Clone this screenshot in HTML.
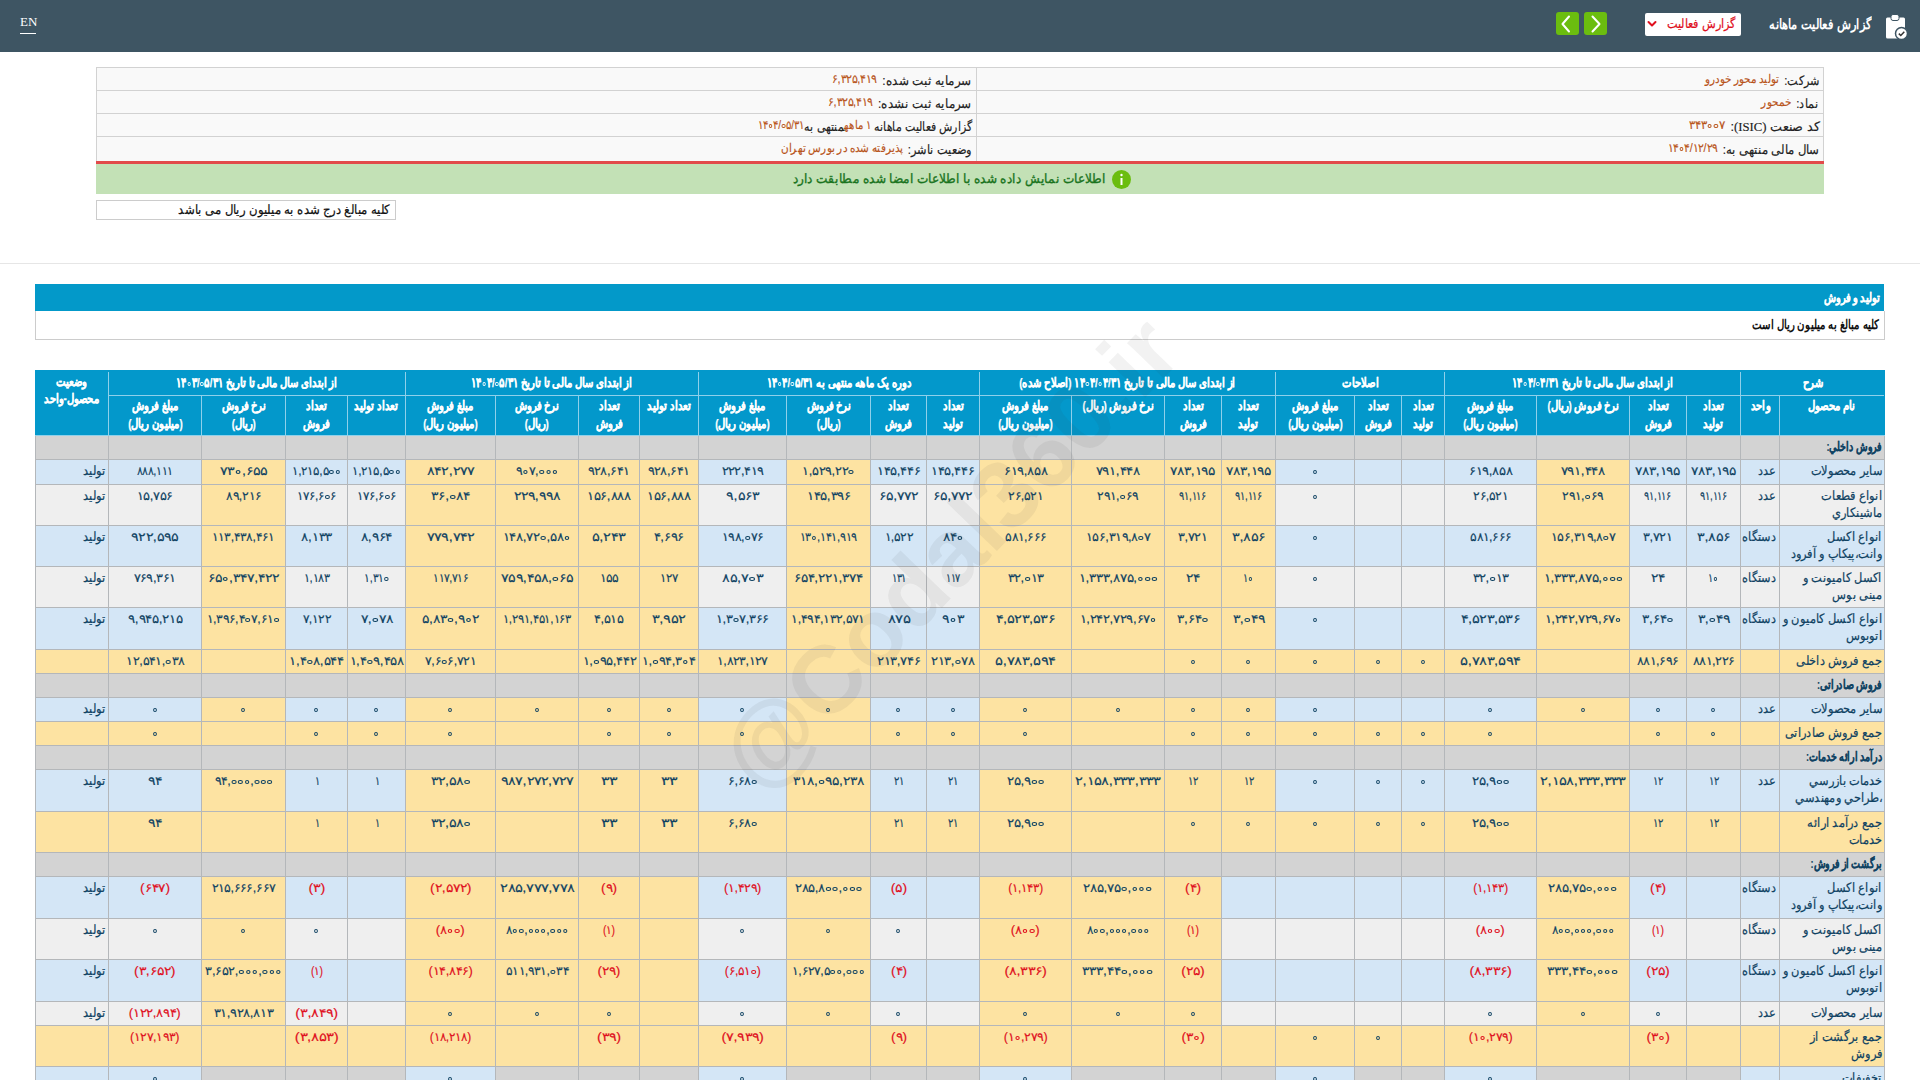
<!DOCTYPE html>
<html lang="fa" dir="rtl"><head><meta charset="utf-8"><title>codal</title><style>
*{box-sizing:border-box}
html,body{margin:0;padding:0}
body{width:1920px;height:1080px;overflow:hidden;background:#fff;position:relative;font-family:"Liberation Sans",sans-serif;direction:rtl}
.a{position:absolute}
.c{position:absolute;font-size:11px;line-height:17px;padding-top:3px;text-align:center;color:#0f4262;white-space:nowrap;overflow:hidden}
.z{display:inline-block;width:4.6px;height:3.9px;border:1.4px solid currentColor;border-radius:50%;margin:0 0.8px;vertical-align:1.5px}
.n{display:inline-block;direction:ltr;unicode-bidi:isolate;font-size:12px;-webkit-text-stroke:0.15px #0f4262}
.r{color:#e0101e;-webkit-text-stroke:0.15px #e0101e}
.lab{text-align:right;padding-right:2px}
.vz{text-align:right;padding-right:2px}
.un{text-align:right;padding-right:3px}
.l{display:inline-block;font-size:12.5px;transform-origin:100% 50%;transform:scaleX(0.878);-webkit-text-stroke:0.2px #0f4262}
.sec .l{-webkit-text-stroke:0.15px #0f4262;transform:scaleX(0.73)}
.sec{font-weight:bold}
.hd{color:#fff;font-weight:bold;font-size:12.5px;-webkit-text-stroke:0.25px #fff;display:flex;justify-content:center;align-items:flex-start;overflow:visible}
.hs{display:inline-block;transform:scaleX(0.77)}
.u{display:inline-block;transform-origin:100% 50%;transform:scaleX(0.87);font-size:12.5px;-webkit-text-stroke:0.2px #174a6b}
.h1{padding-top:3px}
.h2{padding-top:2px;line-height:17.5px}
.vzh{line-height:17.5px;padding-top:1.5px}
.top{left:0;top:0;width:1920px;height:52px;background:#3e5563}
.info{left:96px;top:67px;width:1728px;height:95px;background:#d2d2d2;}
.ir{position:absolute;background:#f9f9f9;font-size:13px;line-height:22px;padding-top:2px;color:#222;-webkit-text-stroke:0.15px #222;padding-right:4px;white-space:nowrap}
.o{color:#b8541a;-webkit-text-stroke:0.15px #b8541a;font-size:12px;margin-right:6px;position:relative;top:-2px}
.iw{display:inline-block;transform-origin:100% 50%}
.d{display:inline-block;direction:ltr;unicode-bidi:isolate}
.lat{font-family:"Liberation Serif",serif;font-size:13px}
</style></head>
<body>
<div class="a top"></div>
<svg class="a" style="left:0;top:0" width="1920" height="52">
<rect x="1556" y="12" width="23" height="23" rx="3" fill="#6bbd0f"/>
<rect x="1584" y="12" width="23" height="23" rx="3" fill="#6bbd0f"/>
<path d="M1569 16.5 L1562.5 24 L1569 31.5" stroke="#fff" stroke-width="2" fill="none" stroke-linecap="round" stroke-linejoin="round"/>
<path d="M1592.5 16.5 L1599.5 24 L1592.5 31.5" stroke="#fff" stroke-width="2" fill="none" stroke-linecap="round" stroke-linejoin="round"/>
<rect x="1645" y="13" width="96" height="23" rx="2" fill="#fff"/>
<path d="M1648.5 22 L1652 25.5 L1655.5 22" stroke="#e0101e" stroke-width="2" fill="none" stroke-linecap="round" stroke-linejoin="round"/>
<rect x="1886" y="17.5" width="19" height="21" rx="1.5" fill="#fff"/>
<rect x="1891" y="14.5" width="8" height="6" rx="2" fill="#fff" stroke="#3e5563" stroke-width="1"/>
<circle cx="1901.5" cy="33.5" r="6" fill="#fff" stroke="#3e5563" stroke-width="1.5"/>
<path d="M1898.8 33.6 L1900.8 35.5 L1904.3 31.8" stroke="#333" stroke-width="1.5" fill="none"/>
<line x1="20" y1="33.5" x2="36" y2="33.5" stroke="#fff" stroke-width="1"/>
</svg>
<div class="a" style="left:20px;top:14px;font-family:'Liberation Serif',serif;color:#fff;font-size:13px;line-height:16px;direction:ltr">EN</div>
<div id="ttl" class="a" style="right:48px;top:13px;color:#fff;font-size:14px;font-weight:bold;line-height:22px"><span style="display:inline-block;transform-origin:100% 50%;transform:scaleX(0.814)">گزارش فعالیت ماهانه</span></div>
<div id="sel" class="a" style="right:184px;top:14px;color:#e0101e;font-size:13px;line-height:20px;-webkit-text-stroke:0.2px #e0101e"><span style="display:inline-block;transform-origin:100% 50%;transform:scaleX(0.867)">گزارش فعالیت</span></div>
<div class="a info"></div>
<div class="ir" style="left:977px;top:68px;width:846px;height:22px"><span class="iw" style="transform:scaleX(0.864)">شرکت:<span class="o">تولید محور خودرو</span></span></div>
<div class="ir" style="left:97px;top:68px;width:879px;height:22px"><span class="iw" style="transform:scaleX(0.921)">سرمایه ثبت شده:<span class="o"><span class="d">۶,۳۲۵,۴۱۹</span></span></span></div>
<div class="ir" style="left:977px;top:91px;width:846px;height:22px"><span class="iw" style="transform:scaleX(0.871)">نماد:<span class="o">خمحور</span></span></div>
<div class="ir" style="left:97px;top:91px;width:879px;height:22px"><span class="iw" style="transform:scaleX(0.917)">سرمایه ثبت نشده:<span class="o"><span class="d">۶,۳۲۵,۴۱۹</span></span></span></div>
<div class="ir" style="left:977px;top:114px;width:846px;height:22px"><span class="iw" style="transform:scaleX(0.977)">کد صنعت <span class="lat">(ISIC)</span>:<span class="o"><span class="d">۳۴۳<i class="z"></i><i class="z"></i>۷</span></span></span></div>
<div class="ir" style="left:97px;top:114px;width:879px;height:22px"><span class="iw" style="transform:scaleX(0.843)">گزارش فعالیت ماهانه <span class="o" style="margin:0"><span class="d">۱</span> ماهه</span>منتهی به<span class="o" style="margin:0"><span class="d">۱۴<i class="z"></i>۴/<i class="z"></i>۵/۳۱</span></span></span></div>
<div class="ir" style="left:977px;top:137px;width:846px;height:24px"><span class="iw" style="transform:scaleX(0.899)">سال مالی منتهی به:<span class="o"><span class="d">۱۴<i class="z"></i>۴/۱۲/۲۹</span></span></span></div>
<div class="ir" style="left:97px;top:137px;width:879px;height:24px"><span class="iw" style="transform:scaleX(0.872)">وضعیت ناشر:<span class="o">پذیرفته شده در بورس تهران</span></span></div>
<div class="a" style="left:96px;top:161px;width:1728px;height:3px;background:#e24a4a"></div>
<div class="a" style="left:96px;top:164px;width:1728px;height:30px;background:#c3e1b6"></div>
<div id="grn" class="a" style="right:814px;top:169px;color:#1a741e;font-size:13px;line-height:20px;-webkit-text-stroke:0.35px #1a741e"><span style="display:inline-block;transform-origin:100% 50%;transform:scaleX(0.93)">اطلاعات نمایش داده شده با اطلاعات امضا شده مطابقت دارد</span></div>
<svg class="a" style="left:1111px;top:169px" width="21" height="21"><circle cx="10.5" cy="10.5" r="9.5" fill="#6bbd0f"/><rect x="9.5" y="9" width="2" height="7" fill="#fff"/><circle cx="10.5" cy="6" r="1.2" fill="#fff"/></svg>
<div id="note" class="a" style="left:96px;top:200px;width:300px;height:20px;border:1px solid #ccc;font-size:13px;line-height:18px;color:#111;-webkit-text-stroke:0.2px #111;padding-right:5px"><span style="display:inline-block;transform-origin:100% 50%;transform:scaleX(0.9)">کلیه مبالغ درج شده به میلیون ریال می باشد</span></div>
<div class="a" style="left:0;top:263px;width:1920px;height:1px;background:#e6e6e6"></div>
<div class="a" style="left:35px;top:284px;width:1849px;height:27px;background:#0399c9;color:#fff;font-weight:bold;font-size:13px;line-height:27px;padding-right:4px;-webkit-text-stroke:0.2px #fff"><span style="display:inline-block;transform-origin:100% 50%;transform:scaleX(0.76)">تولید و فروش</span></div>
<div class="a" style="left:35px;top:311px;width:1850px;height:29px;border:1px solid #ccc;border-top:0;font-weight:bold;font-size:13px;line-height:28px;padding-right:5px;color:#111"><span style="display:inline-block;transform-origin:100% 50%;transform:scaleX(0.778)">کلیه مبالغ به میلیون ریال است</span></div>
<div class="a" style="left:35px;top:370px;width:1850px;height:66px;background:#8fd0ea"></div>
<div class="a" style="left:35px;top:370px;width:1850px;height:2px;background:#0398cb"></div>
<div class="a" style="left:35px;top:370px;width:1px;height:65px;background:#0398cb"></div>
<div class="a" style="left:1884px;top:370px;width:1px;height:65px;background:#0398cb"></div>
<div class="a" style="left:35px;top:436px;width:1850px;height:644px;background:#b4b7ba"></div>
<div class="c hd h1" style="left:1741px;top:372px;width:143px;height:23px;background:#0398cb"><span class="hs">شرح</span></div>
<div class="c hd h1" style="left:1445px;top:372px;width:295px;height:23px;background:#0398cb"><span class="hs">از ابتدای سال مالی تا تاریخ <span class="d">۱۴<i class="z"></i>۴/<i class="z"></i>۴/۳۱</span></span></div>
<div class="c hd h1" style="left:1276px;top:372px;width:168px;height:23px;background:#0398cb"><span class="hs">اصلاحات</span></div>
<div class="c hd h1" style="left:980px;top:372px;width:295px;height:23px;background:#0398cb"><span class="hs">از ابتدای سال مالی تا تاریخ <span class="d">۱۴<i class="z"></i>۴/<i class="z"></i>۴/۳۱</span> (اصلاح شده)</span></div>
<div class="c hd h1" style="left:699px;top:372px;width:280px;height:23px;background:#0398cb"><span class="hs">دوره یک ماهه منتهی به <span class="d">۱۴<i class="z"></i>۴/<i class="z"></i>۵/۳۱</span></span></div>
<div class="c hd h1" style="left:406px;top:372px;width:292px;height:23px;background:#0398cb"><span class="hs">از ابتدای سال مالی تا تاریخ <span class="d">۱۴<i class="z"></i>۴/<i class="z"></i>۵/۳۱</span></span></div>
<div class="c hd h1" style="left:109px;top:372px;width:296px;height:23px;background:#0398cb"><span class="hs">از ابتدای سال مالی تا تاریخ <span class="d">۱۴<i class="z"></i>۳/<i class="z"></i>۵/۳۱</span></span></div>
<div class="c hd vzh" style="left:36px;top:372px;width:72px;height:63px;background:#0398cb"><span class="hs">وضعیت<br>محصول-واحد</span></div>
<div class="c hd h2" style="left:1780px;top:396px;width:104px;height:39px;background:#0398cb"><span class="hs">نام محصول</span></div>
<div class="c hd h2" style="left:1741px;top:396px;width:38px;height:39px;background:#0398cb"><span class="hs">واحد</span></div>
<div class="c hd h2" style="left:1687px;top:396px;width:53px;height:39px;background:#0398cb"><span class="hs">تعداد<br>تولید</span></div>
<div class="c hd h2" style="left:1630px;top:396px;width:56px;height:39px;background:#0398cb"><span class="hs">تعداد<br>فروش</span></div>
<div class="c hd h2" style="left:1537px;top:396px;width:92px;height:39px;background:#0398cb"><span class="hs">نرخ فروش (ریال)</span></div>
<div class="c hd h2" style="left:1445px;top:396px;width:91px;height:39px;background:#0398cb"><span class="hs">مبلغ فروش<br>(میلیون ریال)</span></div>
<div class="c hd h2" style="left:1402px;top:396px;width:42px;height:39px;background:#0398cb"><span class="hs">تعداد<br>تولید</span></div>
<div class="c hd h2" style="left:1355px;top:396px;width:46px;height:39px;background:#0398cb"><span class="hs">تعداد<br>فروش</span></div>
<div class="c hd h2" style="left:1276px;top:396px;width:78px;height:39px;background:#0398cb"><span class="hs">مبلغ فروش<br>(میلیون ریال)</span></div>
<div class="c hd h2" style="left:1222px;top:396px;width:53px;height:39px;background:#0398cb"><span class="hs">تعداد<br>تولید</span></div>
<div class="c hd h2" style="left:1165px;top:396px;width:56px;height:39px;background:#0398cb"><span class="hs">تعداد<br>فروش</span></div>
<div class="c hd h2" style="left:1072px;top:396px;width:92px;height:39px;background:#0398cb"><span class="hs">نرخ فروش (ریال)</span></div>
<div class="c hd h2" style="left:980px;top:396px;width:91px;height:39px;background:#0398cb"><span class="hs">مبلغ فروش<br>(میلیون ریال)</span></div>
<div class="c hd h2" style="left:927px;top:396px;width:52px;height:39px;background:#0398cb"><span class="hs">تعداد<br>تولید</span></div>
<div class="c hd h2" style="left:871px;top:396px;width:55px;height:39px;background:#0398cb"><span class="hs">تعداد<br>فروش</span></div>
<div class="c hd h2" style="left:787px;top:396px;width:83px;height:39px;background:#0398cb"><span class="hs">نرخ فروش<br>(ریال)</span></div>
<div class="c hd h2" style="left:699px;top:396px;width:87px;height:39px;background:#0398cb"><span class="hs">مبلغ فروش<br>(میلیون ریال)</span></div>
<div class="c hd h2" style="left:640px;top:396px;width:58px;height:39px;background:#0398cb"><span class="hs">تعداد تولید</span></div>
<div class="c hd h2" style="left:579px;top:396px;width:60px;height:39px;background:#0398cb"><span class="hs">تعداد<br>فروش</span></div>
<div class="c hd h2" style="left:496px;top:396px;width:82px;height:39px;background:#0398cb"><span class="hs">نرخ فروش<br>(ریال)</span></div>
<div class="c hd h2" style="left:406px;top:396px;width:89px;height:39px;background:#0398cb"><span class="hs">مبلغ فروش<br>(میلیون ریال)</span></div>
<div class="c hd h2" style="left:348px;top:396px;width:57px;height:39px;background:#0398cb"><span class="hs">تعداد تولید</span></div>
<div class="c hd h2" style="left:286px;top:396px;width:61px;height:39px;background:#0398cb"><span class="hs">تعداد<br>فروش</span></div>
<div class="c hd h2" style="left:202px;top:396px;width:83px;height:39px;background:#0398cb"><span class="hs">نرخ فروش<br>(ریال)</span></div>
<div class="c hd h2" style="left:109px;top:396px;width:92px;height:39px;background:#0398cb"><span class="hs">مبلغ فروش<br>(میلیون ریال)</span></div>
<div class="c lab sec" style="left:1780px;top:436px;width:104px;height:23px;background:#d3d3d3"><span class="l">فروش داخلي:</span></div>
<div class="c" style="left:1741px;top:436px;width:38px;height:23px;background:#d3d3d3"></div>
<div class="c" style="left:1687px;top:436px;width:53px;height:23px;background:#d3d3d3"></div>
<div class="c" style="left:1630px;top:436px;width:56px;height:23px;background:#d3d3d3"></div>
<div class="c" style="left:1537px;top:436px;width:92px;height:23px;background:#d3d3d3"></div>
<div class="c" style="left:1445px;top:436px;width:91px;height:23px;background:#d3d3d3"></div>
<div class="c" style="left:1402px;top:436px;width:42px;height:23px;background:#d3d3d3"></div>
<div class="c" style="left:1355px;top:436px;width:46px;height:23px;background:#d3d3d3"></div>
<div class="c" style="left:1276px;top:436px;width:78px;height:23px;background:#d3d3d3"></div>
<div class="c" style="left:1222px;top:436px;width:53px;height:23px;background:#d3d3d3"></div>
<div class="c" style="left:1165px;top:436px;width:56px;height:23px;background:#d3d3d3"></div>
<div class="c" style="left:1072px;top:436px;width:92px;height:23px;background:#d3d3d3"></div>
<div class="c" style="left:980px;top:436px;width:91px;height:23px;background:#d3d3d3"></div>
<div class="c" style="left:927px;top:436px;width:52px;height:23px;background:#d3d3d3"></div>
<div class="c" style="left:871px;top:436px;width:55px;height:23px;background:#d3d3d3"></div>
<div class="c" style="left:787px;top:436px;width:83px;height:23px;background:#d3d3d3"></div>
<div class="c" style="left:699px;top:436px;width:87px;height:23px;background:#d3d3d3"></div>
<div class="c" style="left:640px;top:436px;width:58px;height:23px;background:#d3d3d3"></div>
<div class="c" style="left:579px;top:436px;width:60px;height:23px;background:#d3d3d3"></div>
<div class="c" style="left:496px;top:436px;width:82px;height:23px;background:#d3d3d3"></div>
<div class="c" style="left:406px;top:436px;width:89px;height:23px;background:#d3d3d3"></div>
<div class="c" style="left:348px;top:436px;width:57px;height:23px;background:#d3d3d3"></div>
<div class="c" style="left:286px;top:436px;width:61px;height:23px;background:#d3d3d3"></div>
<div class="c" style="left:202px;top:436px;width:83px;height:23px;background:#d3d3d3"></div>
<div class="c" style="left:109px;top:436px;width:92px;height:23px;background:#d3d3d3"></div>
<div class="c" style="left:36px;top:436px;width:72px;height:23px;background:#d3d3d3"></div>
<div class="c lab" style="left:1780px;top:460px;width:104px;height:24px;background:#d4e6f6"><span class="l">سایر محصولات</span></div>
<div class="c un" style="left:1741px;top:460px;width:38px;height:24px;background:#d4e6f6"><span class="u">عدد</span></div>
<div class="c" style="left:1687px;top:460px;width:53px;height:24px;background:#d4e6f6"><span class="n" style="transform:scaleX(1.144)">۷۸۳,۱۹۵</span></div>
<div class="c" style="left:1630px;top:460px;width:56px;height:24px;background:#d4e6f6"><span class="n" style="transform:scaleX(1.144)">۷۸۳,۱۹۵</span></div>
<div class="c" style="left:1537px;top:460px;width:92px;height:24px;background:#fde3a2"><span class="n" style="transform:scaleX(1.115)">۷۹۱,۴۴۸</span></div>
<div class="c" style="left:1445px;top:460px;width:91px;height:24px;background:#d4e6f6"><span class="n" style="transform:scaleX(1.092)">۶۱۹,۸۵۸</span></div>
<div class="c" style="left:1402px;top:460px;width:42px;height:24px;background:#d4e6f6"></div>
<div class="c" style="left:1355px;top:460px;width:46px;height:24px;background:#d4e6f6"></div>
<div class="c" style="left:1276px;top:460px;width:78px;height:24px;background:#d4e6f6"><span class="n" style="transform:scaleX(0.933)"><i class="z"></i></span></div>
<div class="c" style="left:1222px;top:460px;width:53px;height:24px;background:#fde3a2"><span class="n" style="transform:scaleX(1.144)">۷۸۳,۱۹۵</span></div>
<div class="c" style="left:1165px;top:460px;width:56px;height:24px;background:#fde3a2"><span class="n" style="transform:scaleX(1.144)">۷۸۳,۱۹۵</span></div>
<div class="c" style="left:1072px;top:460px;width:92px;height:24px;background:#fde3a2"><span class="n" style="transform:scaleX(1.115)">۷۹۱,۴۴۸</span></div>
<div class="c" style="left:980px;top:460px;width:91px;height:24px;background:#fde3a2"><span class="n" style="transform:scaleX(1.092)">۶۱۹,۸۵۸</span></div>
<div class="c" style="left:927px;top:460px;width:52px;height:24px;background:#d4e6f6"><span class="n" style="transform:scaleX(1.092)">۱۴۵,۴۴۶</span></div>
<div class="c" style="left:871px;top:460px;width:55px;height:24px;background:#d4e6f6"><span class="n" style="transform:scaleX(1.092)">۱۴۵,۴۴۶</span></div>
<div class="c" style="left:787px;top:460px;width:83px;height:24px;background:#fde3a2"><span class="n" style="transform:scaleX(1.069)">۱,۵۲۹,۲۲<i class="z"></i></span></div>
<div class="c" style="left:699px;top:460px;width:87px;height:24px;background:#d4e6f6"><span class="n" style="transform:scaleX(1.072)">۲۲۲,۴۱۹</span></div>
<div class="c" style="left:640px;top:460px;width:58px;height:24px;background:#fde3a2"><span class="n" style="transform:scaleX(1.069)">۹۲۸,۶۴۱</span></div>
<div class="c" style="left:579px;top:460px;width:60px;height:24px;background:#fde3a2"><span class="n" style="transform:scaleX(1.069)">۹۲۸,۶۴۱</span></div>
<div class="c" style="left:496px;top:460px;width:82px;height:24px;background:#fde3a2"><span class="n" style="transform:scaleX(1.052)">۹<i class="z"></i>۷,<i class="z"></i><i class="z"></i><i class="z"></i></span></div>
<div class="c" style="left:406px;top:460px;width:89px;height:24px;background:#fde3a2"><span class="n" style="transform:scaleX(1.197)">۸۴۲,۲۷۷</span></div>
<div class="c" style="left:348px;top:460px;width:57px;height:24px;background:#d4e6f6"><span class="n" style="transform:scaleX(0.992)">۱,۲۱۵,۵<i class="z"></i><i class="z"></i></span></div>
<div class="c" style="left:286px;top:460px;width:61px;height:24px;background:#d4e6f6"><span class="n" style="transform:scaleX(0.992)">۱,۲۱۵,۵<i class="z"></i><i class="z"></i></span></div>
<div class="c" style="left:202px;top:460px;width:83px;height:24px;background:#fde3a2"><span class="n" style="transform:scaleX(1.190)">۷۳<i class="z"></i>,۶۵۵</span></div>
<div class="c" style="left:109px;top:460px;width:92px;height:24px;background:#d4e6f6"><span class="n" style="transform:scaleX(0.923)">۸۸۸,۱۱۱</span></div>
<div class="c vz" style="left:36px;top:460px;width:72px;height:24px;background:#d4e6f6"><span class="l">تولید</span></div>
<div class="c lab" style="left:1780px;top:485px;width:104px;height:40px;background:#efefef"><span class="l">انواع قطعات<br>ماشینکاري</span></div>
<div class="c un" style="left:1741px;top:485px;width:38px;height:40px;background:#efefef"><span class="u">عدد</span></div>
<div class="c" style="left:1687px;top:485px;width:53px;height:40px;background:#efefef"><span class="n" style="transform:scaleX(0.812)">۹۱,۱۱۶</span></div>
<div class="c" style="left:1630px;top:485px;width:56px;height:40px;background:#efefef"><span class="n" style="transform:scaleX(0.812)">۹۱,۱۱۶</span></div>
<div class="c" style="left:1537px;top:485px;width:92px;height:40px;background:#fde3a2"><span class="n" style="transform:scaleX(1.028)">۲۹۱,<i class="z"></i>۶۹</span></div>
<div class="c" style="left:1445px;top:485px;width:91px;height:40px;background:#efefef"><span class="n" style="transform:scaleX(1.033)">۲۶,۵۲۱</span></div>
<div class="c" style="left:1402px;top:485px;width:42px;height:40px;background:#efefef"></div>
<div class="c" style="left:1355px;top:485px;width:46px;height:40px;background:#efefef"></div>
<div class="c" style="left:1276px;top:485px;width:78px;height:40px;background:#efefef"><span class="n" style="transform:scaleX(0.933)"><i class="z"></i></span></div>
<div class="c" style="left:1222px;top:485px;width:53px;height:40px;background:#fde3a2"><span class="n" style="transform:scaleX(0.812)">۹۱,۱۱۶</span></div>
<div class="c" style="left:1165px;top:485px;width:56px;height:40px;background:#fde3a2"><span class="n" style="transform:scaleX(0.812)">۹۱,۱۱۶</span></div>
<div class="c" style="left:1072px;top:485px;width:92px;height:40px;background:#fde3a2"><span class="n" style="transform:scaleX(1.028)">۲۹۱,<i class="z"></i>۶۹</span></div>
<div class="c" style="left:980px;top:485px;width:91px;height:40px;background:#fde3a2"><span class="n" style="transform:scaleX(1.033)">۲۶,۵۲۱</span></div>
<div class="c" style="left:927px;top:485px;width:52px;height:40px;background:#efefef"><span class="n" style="transform:scaleX(1.173)">۶۵,۷۷۲</span></div>
<div class="c" style="left:871px;top:485px;width:55px;height:40px;background:#efefef"><span class="n" style="transform:scaleX(1.173)">۶۵,۷۷۲</span></div>
<div class="c" style="left:787px;top:485px;width:83px;height:40px;background:#fde3a2"><span class="n" style="transform:scaleX(1.108)">۱۴۵,۳۹۶</span></div>
<div class="c" style="left:699px;top:485px;width:87px;height:40px;background:#efefef"><span class="n" style="transform:scaleX(1.189)">۹,۵۶۳</span></div>
<div class="c" style="left:640px;top:485px;width:58px;height:40px;background:#fde3a2"><span class="n" style="transform:scaleX(1.100)">۱۵۶,۸۸۸</span></div>
<div class="c" style="left:579px;top:485px;width:60px;height:40px;background:#fde3a2"><span class="n" style="transform:scaleX(1.100)">۱۵۶,۸۸۸</span></div>
<div class="c" style="left:496px;top:485px;width:82px;height:40px;background:#fde3a2"><span class="n" style="transform:scaleX(1.177)">۲۲۹,۹۹۸</span></div>
<div class="c" style="left:406px;top:485px;width:89px;height:40px;background:#fde3a2"><span class="n" style="transform:scaleX(1.161)">۳۶,<i class="z"></i>۸۴</span></div>
<div class="c" style="left:348px;top:485px;width:57px;height:40px;background:#efefef"><span class="n" style="transform:scaleX(0.992)">۱۷۶,۶<i class="z"></i>۶</span></div>
<div class="c" style="left:286px;top:485px;width:61px;height:40px;background:#efefef"><span class="n" style="transform:scaleX(0.992)">۱۷۶,۶<i class="z"></i>۶</span></div>
<div class="c" style="left:202px;top:485px;width:83px;height:40px;background:#fde3a2"><span class="n" style="transform:scaleX(1.036)">۸۹,۲۱۶</span></div>
<div class="c" style="left:109px;top:485px;width:92px;height:40px;background:#efefef"><span class="n" style="transform:scaleX(1.076)">۱۵,۷۵۶</span></div>
<div class="c vz" style="left:36px;top:485px;width:72px;height:40px;background:#efefef"><span class="l">تولید</span></div>
<div class="c lab" style="left:1780px;top:526px;width:104px;height:40px;background:#d4e6f6"><span class="l">انواع اکسل<br>وانت،پیکاپ و آفرود</span></div>
<div class="c un" style="left:1741px;top:526px;width:38px;height:40px;background:#d4e6f6"><span class="u">دستگاه</span></div>
<div class="c" style="left:1687px;top:526px;width:53px;height:40px;background:#d4e6f6"><span class="n" style="transform:scaleX(1.200)">۳,۸۵۶</span></div>
<div class="c" style="left:1630px;top:526px;width:56px;height:40px;background:#d4e6f6"><span class="n" style="transform:scaleX(1.070)">۳,۷۲۱</span></div>
<div class="c" style="left:1537px;top:526px;width:92px;height:40px;background:#fde3a2"><span class="n" style="transform:scaleX(1.062)">۱۵۶,۳۱۹,۸<i class="z"></i>۷</span></div>
<div class="c" style="left:1445px;top:526px;width:91px;height:40px;background:#d4e6f6"><span class="n" style="transform:scaleX(1.033)">۵۸۱,۶۶۶</span></div>
<div class="c" style="left:1402px;top:526px;width:42px;height:40px;background:#d4e6f6"></div>
<div class="c" style="left:1355px;top:526px;width:46px;height:40px;background:#d4e6f6"></div>
<div class="c" style="left:1276px;top:526px;width:78px;height:40px;background:#d4e6f6"><span class="n" style="transform:scaleX(0.933)"><i class="z"></i></span></div>
<div class="c" style="left:1222px;top:526px;width:53px;height:40px;background:#fde3a2"><span class="n" style="transform:scaleX(1.200)">۳,۸۵۶</span></div>
<div class="c" style="left:1165px;top:526px;width:56px;height:40px;background:#fde3a2"><span class="n" style="transform:scaleX(1.070)">۳,۷۲۱</span></div>
<div class="c" style="left:1072px;top:526px;width:92px;height:40px;background:#fde3a2"><span class="n" style="transform:scaleX(1.062)">۱۵۶,۳۱۹,۸<i class="z"></i>۷</span></div>
<div class="c" style="left:980px;top:526px;width:91px;height:40px;background:#fde3a2"><span class="n" style="transform:scaleX(1.033)">۵۸۱,۶۶۶</span></div>
<div class="c" style="left:927px;top:526px;width:52px;height:40px;background:#d4e6f6"><span class="n" style="transform:scaleX(1.150)">۸۴<i class="z"></i></span></div>
<div class="c" style="left:871px;top:526px;width:55px;height:40px;background:#d4e6f6"><span class="n" style="transform:scaleX(1.030)">۱,۵۲۲</span></div>
<div class="c" style="left:787px;top:526px;width:83px;height:40px;background:#fde3a2"><span class="n" style="transform:scaleX(0.940)">۱۳<i class="z"></i>,۱۴۱,۹۱۹</span></div>
<div class="c" style="left:699px;top:526px;width:87px;height:40px;background:#d4e6f6"><span class="n" style="transform:scaleX(1.051)">۱۹۸,<i class="z"></i>۷۶</span></div>
<div class="c" style="left:640px;top:526px;width:58px;height:40px;background:#fde3a2"><span class="n" style="transform:scaleX(1.104)">۴,۶۹۶</span></div>
<div class="c" style="left:579px;top:526px;width:60px;height:40px;background:#fde3a2"><span class="n" style="transform:scaleX(1.222)">۵,۲۴۳</span></div>
<div class="c" style="left:496px;top:526px;width:82px;height:40px;background:#fde3a2"><span class="n" style="transform:scaleX(1.108)">۱۴۸,۷۲<i class="z"></i>,۵۸<i class="z"></i></span></div>
<div class="c" style="left:406px;top:526px;width:89px;height:40px;background:#fde3a2"><span class="n" style="transform:scaleX(1.205)">۷۷۹,۷۴۲</span></div>
<div class="c" style="left:348px;top:526px;width:57px;height:40px;background:#d4e6f6"><span class="n" style="transform:scaleX(1.152)">۸,۹۶۴</span></div>
<div class="c" style="left:286px;top:526px;width:61px;height:40px;background:#d4e6f6"><span class="n" style="transform:scaleX(1.119)">۸,۱۳۳</span></div>
<div class="c" style="left:202px;top:526px;width:83px;height:40px;background:#fde3a2"><span class="n" style="transform:scaleX(1.028)">۱۱۳,۴۳۸,۴۶۱</span></div>
<div class="c" style="left:109px;top:526px;width:92px;height:40px;background:#d4e6f6"><span class="n" style="transform:scaleX(1.195)">۹۲۲,۵۹۵</span></div>
<div class="c vz" style="left:36px;top:526px;width:72px;height:40px;background:#d4e6f6"><span class="l">تولید</span></div>
<div class="c lab" style="left:1780px;top:567px;width:104px;height:40px;background:#efefef"><span class="l">اکسل کامیونت و<br>مینی بوس</span></div>
<div class="c un" style="left:1741px;top:567px;width:38px;height:40px;background:#efefef"><span class="u">دستگاه</span></div>
<div class="c" style="left:1687px;top:567px;width:53px;height:40px;background:#efefef"><span class="n" style="transform:scaleX(0.800)">۱<i class="z"></i></span></div>
<div class="c" style="left:1630px;top:567px;width:56px;height:40px;background:#efefef"><span class="n" style="transform:scaleX(1.158)">۲۴</span></div>
<div class="c" style="left:1537px;top:567px;width:92px;height:40px;background:#fde3a2"><span class="n" style="transform:scaleX(1.121)">۱,۳۳۳,۸۷۵,<i class="z"></i><i class="z"></i><i class="z"></i></span></div>
<div class="c" style="left:1445px;top:567px;width:91px;height:40px;background:#efefef"><span class="n" style="transform:scaleX(1.085)">۳۲,<i class="z"></i>۱۳</span></div>
<div class="c" style="left:1402px;top:567px;width:42px;height:40px;background:#efefef"></div>
<div class="c" style="left:1355px;top:567px;width:46px;height:40px;background:#efefef"></div>
<div class="c" style="left:1276px;top:567px;width:78px;height:40px;background:#efefef"><span class="n" style="transform:scaleX(0.933)"><i class="z"></i></span></div>
<div class="c" style="left:1222px;top:567px;width:53px;height:40px;background:#fde3a2"><span class="n" style="transform:scaleX(0.800)">۱<i class="z"></i></span></div>
<div class="c" style="left:1165px;top:567px;width:56px;height:40px;background:#fde3a2"><span class="n" style="transform:scaleX(1.158)">۲۴</span></div>
<div class="c" style="left:1072px;top:567px;width:92px;height:40px;background:#fde3a2"><span class="n" style="transform:scaleX(1.121)">۱,۳۳۳,۸۷۵,<i class="z"></i><i class="z"></i><i class="z"></i></span></div>
<div class="c" style="left:980px;top:567px;width:91px;height:40px;background:#fde3a2"><span class="n" style="transform:scaleX(1.085)">۳۲,<i class="z"></i>۱۳</span></div>
<div class="c" style="left:927px;top:567px;width:52px;height:40px;background:#efefef"><span class="n" style="transform:scaleX(0.800)">۱۱۷</span></div>
<div class="c" style="left:871px;top:567px;width:55px;height:40px;background:#efefef"><span class="n" style="transform:scaleX(0.828)">۱۳۱</span></div>
<div class="c" style="left:787px;top:567px;width:83px;height:40px;background:#fde3a2"><span class="n" style="transform:scaleX(1.133)">۶۵۴,۲۲۱,۳۷۴</span></div>
<div class="c" style="left:699px;top:567px;width:87px;height:40px;background:#efefef"><span class="n" style="transform:scaleX(1.209)">۸۵,۷<i class="z"></i>۳</span></div>
<div class="c" style="left:640px;top:567px;width:58px;height:40px;background:#fde3a2"><span class="n" style="transform:scaleX(0.978)">۱۲۷</span></div>
<div class="c" style="left:579px;top:567px;width:60px;height:40px;background:#fde3a2"><span class="n" style="transform:scaleX(1.033)">۱۵۵</span></div>
<div class="c" style="left:496px;top:567px;width:82px;height:40px;background:#fde3a2"><span class="n" style="transform:scaleX(1.188)">۷۵۹,۴۵۸,<i class="z"></i>۶۵</span></div>
<div class="c" style="left:406px;top:567px;width:89px;height:40px;background:#fde3a2"><span class="n" style="transform:scaleX(0.890)">۱۱۷,۷۱۶</span></div>
<div class="c" style="left:348px;top:567px;width:57px;height:40px;background:#efefef"><span class="n" style="transform:scaleX(0.893)">۱,۳۱<i class="z"></i></span></div>
<div class="c" style="left:286px;top:567px;width:61px;height:40px;background:#efefef"><span class="n" style="transform:scaleX(0.944)">۱,۱۸۳</span></div>
<div class="c" style="left:202px;top:567px;width:83px;height:40px;background:#fde3a2"><span class="n" style="transform:scaleX(1.177)">۶۵<i class="z"></i>,۳۴۷,۴۲۲</span></div>
<div class="c" style="left:109px;top:567px;width:92px;height:40px;background:#efefef"><span class="n" style="transform:scaleX(1.072)">۷۶۹,۳۶۱</span></div>
<div class="c vz" style="left:36px;top:567px;width:72px;height:40px;background:#efefef"><span class="l">تولید</span></div>
<div class="c lab" style="left:1780px;top:608px;width:104px;height:41px;background:#d4e6f6"><span class="l">انواع اکسل کامیون و<br>اتوبوس</span></div>
<div class="c un" style="left:1741px;top:608px;width:38px;height:41px;background:#d4e6f6"><span class="u">دستگاه</span></div>
<div class="c" style="left:1687px;top:608px;width:53px;height:41px;background:#d4e6f6"><span class="n" style="transform:scaleX(1.174)">۳,<i class="z"></i>۴۹</span></div>
<div class="c" style="left:1630px;top:608px;width:56px;height:41px;background:#d4e6f6"><span class="n" style="transform:scaleX(1.137)">۳,۶۴<i class="z"></i></span></div>
<div class="c" style="left:1537px;top:608px;width:92px;height:41px;background:#fde3a2"><span class="n" style="transform:scaleX(1.094)">۱,۲۴۲,۷۲۹,۶۷<i class="z"></i></span></div>
<div class="c" style="left:1445px;top:608px;width:91px;height:41px;background:#d4e6f6"><span class="n" style="transform:scaleX(1.217)">۴,۵۲۳,۵۳۶</span></div>
<div class="c" style="left:1402px;top:608px;width:42px;height:41px;background:#d4e6f6"></div>
<div class="c" style="left:1355px;top:608px;width:46px;height:41px;background:#d4e6f6"></div>
<div class="c" style="left:1276px;top:608px;width:78px;height:41px;background:#d4e6f6"><span class="n" style="transform:scaleX(0.933)"><i class="z"></i></span></div>
<div class="c" style="left:1222px;top:608px;width:53px;height:41px;background:#fde3a2"><span class="n" style="transform:scaleX(1.174)">۳,<i class="z"></i>۴۹</span></div>
<div class="c" style="left:1165px;top:608px;width:56px;height:41px;background:#fde3a2"><span class="n" style="transform:scaleX(1.137)">۳,۶۴<i class="z"></i></span></div>
<div class="c" style="left:1072px;top:608px;width:92px;height:41px;background:#fde3a2"><span class="n" style="transform:scaleX(1.094)">۱,۲۴۲,۷۲۹,۶۷<i class="z"></i></span></div>
<div class="c" style="left:980px;top:608px;width:91px;height:41px;background:#fde3a2"><span class="n" style="transform:scaleX(1.217)">۴,۵۲۳,۵۳۶</span></div>
<div class="c" style="left:927px;top:608px;width:52px;height:41px;background:#d4e6f6"><span class="n" style="transform:scaleX(1.178)">۹<i class="z"></i>۳</span></div>
<div class="c" style="left:871px;top:608px;width:55px;height:41px;background:#d4e6f6"><span class="n" style="transform:scaleX(1.244)">۸۷۵</span></div>
<div class="c" style="left:787px;top:608px;width:83px;height:41px;background:#fde3a2"><span class="n" style="transform:scaleX(1.046)">۱,۴۹۴,۱۳۲,۵۷۱</span></div>
<div class="c" style="left:699px;top:608px;width:87px;height:41px;background:#d4e6f6"><span class="n" style="transform:scaleX(1.083)">۱,۳<i class="z"></i>۷,۳۶۶</span></div>
<div class="c" style="left:640px;top:608px;width:58px;height:41px;background:#fde3a2"><span class="n" style="transform:scaleX(1.215)">۳,۹۵۲</span></div>
<div class="c" style="left:579px;top:608px;width:60px;height:41px;background:#fde3a2"><span class="n" style="transform:scaleX(1.078)">۴,۵۱۵</span></div>
<div class="c" style="left:496px;top:608px;width:82px;height:41px;background:#fde3a2"><span class="n" style="transform:scaleX(0.971)">۱,۲۹۱,۴۵۱,۱۶۳</span></div>
<div class="c" style="left:406px;top:608px;width:89px;height:41px;background:#fde3a2"><span class="n" style="transform:scaleX(1.162)">۵,۸۳<i class="z"></i>,۹<i class="z"></i>۲</span></div>
<div class="c" style="left:348px;top:608px;width:57px;height:41px;background:#d4e6f6"><span class="n" style="transform:scaleX(1.163)">۷,<i class="z"></i>۷۸</span></div>
<div class="c" style="left:286px;top:608px;width:61px;height:41px;background:#d4e6f6"><span class="n" style="transform:scaleX(1.022)">۷,۱۲۲</span></div>
<div class="c" style="left:202px;top:608px;width:83px;height:41px;background:#fde3a2"><span class="n" style="transform:scaleX(1.033)">۱,۳۹۶,۴<i class="z"></i>۷,۶۱<i class="z"></i></span></div>
<div class="c" style="left:109px;top:608px;width:92px;height:41px;background:#d4e6f6"><span class="n" style="transform:scaleX(1.119)">۹,۹۴۵,۲۱۵</span></div>
<div class="c vz" style="left:36px;top:608px;width:72px;height:41px;background:#d4e6f6"><span class="l">تولید</span></div>
<div class="c lab" style="left:1780px;top:650px;width:104px;height:23px;background:#fde3a2"><span class="l">جمع فروش داخلی</span></div>
<div class="c un" style="left:1741px;top:650px;width:38px;height:23px;background:#fde3a2"></div>
<div class="c" style="left:1687px;top:650px;width:53px;height:23px;background:#fde3a2"><span class="n" style="transform:scaleX(1.064)">۸۸۱,۲۲۶</span></div>
<div class="c" style="left:1630px;top:650px;width:56px;height:23px;background:#fde3a2"><span class="n" style="transform:scaleX(1.054)">۸۸۱,۶۹۶</span></div>
<div class="c" style="left:1537px;top:650px;width:92px;height:23px;background:#fde3a2"></div>
<div class="c" style="left:1445px;top:650px;width:91px;height:23px;background:#fde3a2"><span class="n" style="transform:scaleX(1.235)">۵,۷۸۳,۵۹۴</span></div>
<div class="c" style="left:1402px;top:650px;width:42px;height:23px;background:#fde3a2"><span class="n" style="transform:scaleX(0.933)"><i class="z"></i></span></div>
<div class="c" style="left:1355px;top:650px;width:46px;height:23px;background:#fde3a2"><span class="n" style="transform:scaleX(0.933)"><i class="z"></i></span></div>
<div class="c" style="left:1276px;top:650px;width:78px;height:23px;background:#fde3a2"><span class="n" style="transform:scaleX(0.933)"><i class="z"></i></span></div>
<div class="c" style="left:1222px;top:650px;width:53px;height:23px;background:#fde3a2"><span class="n" style="transform:scaleX(0.933)"><i class="z"></i></span></div>
<div class="c" style="left:1165px;top:650px;width:56px;height:23px;background:#fde3a2"><span class="n" style="transform:scaleX(0.933)"><i class="z"></i></span></div>
<div class="c" style="left:1072px;top:650px;width:92px;height:23px;background:#fde3a2"></div>
<div class="c" style="left:980px;top:650px;width:91px;height:23px;background:#fde3a2"><span class="n" style="transform:scaleX(1.235)">۵,۷۸۳,۵۹۴</span></div>
<div class="c" style="left:927px;top:650px;width:52px;height:23px;background:#fde3a2"><span class="n" style="transform:scaleX(1.095)">۲۱۳,<i class="z"></i>۷۸</span></div>
<div class="c" style="left:871px;top:650px;width:55px;height:23px;background:#fde3a2"><span class="n" style="transform:scaleX(1.095)">۲۱۳,۷۴۶</span></div>
<div class="c" style="left:787px;top:650px;width:83px;height:23px;background:#fde3a2"></div>
<div class="c" style="left:699px;top:650px;width:87px;height:23px;background:#fde3a2"><span class="n" style="transform:scaleX(1.044)">۱,۸۲۳,۱۲۷</span></div>
<div class="c" style="left:640px;top:650px;width:58px;height:23px;background:#fde3a2"><span class="n" style="transform:scaleX(1.083)">۱,<i class="z"></i>۹۴,۳<i class="z"></i>۴</span></div>
<div class="c" style="left:579px;top:650px;width:60px;height:23px;background:#fde3a2"><span class="n" style="transform:scaleX(1.090)">۱,<i class="z"></i>۹۵,۴۴۲</span></div>
<div class="c" style="left:496px;top:650px;width:82px;height:23px;background:#fde3a2"></div>
<div class="c" style="left:406px;top:650px;width:89px;height:23px;background:#fde3a2"><span class="n" style="transform:scaleX(1.042)">۷,۶<i class="z"></i>۶,۷۲۱</span></div>
<div class="c" style="left:348px;top:650px;width:57px;height:23px;background:#fde3a2"><span class="n" style="transform:scaleX(1.102)">۱,۴<i class="z"></i>۹,۴۵۸</span></div>
<div class="c" style="left:286px;top:650px;width:61px;height:23px;background:#fde3a2"><span class="n" style="transform:scaleX(1.106)">۱,۴<i class="z"></i>۸,۵۴۴</span></div>
<div class="c" style="left:202px;top:650px;width:83px;height:23px;background:#fde3a2"></div>
<div class="c" style="left:109px;top:650px;width:92px;height:23px;background:#fde3a2"><span class="n" style="transform:scaleX(1.056)">۱۲,۵۴۱,<i class="z"></i>۳۸</span></div>
<div class="c vz" style="left:36px;top:650px;width:72px;height:23px;background:#fde3a2"></div>
<div class="c lab sec" style="left:1780px;top:674px;width:104px;height:23px;background:#d3d3d3"><span class="l">فروش صادراتی:</span></div>
<div class="c" style="left:1741px;top:674px;width:38px;height:23px;background:#d3d3d3"></div>
<div class="c" style="left:1687px;top:674px;width:53px;height:23px;background:#d3d3d3"></div>
<div class="c" style="left:1630px;top:674px;width:56px;height:23px;background:#d3d3d3"></div>
<div class="c" style="left:1537px;top:674px;width:92px;height:23px;background:#d3d3d3"></div>
<div class="c" style="left:1445px;top:674px;width:91px;height:23px;background:#d3d3d3"></div>
<div class="c" style="left:1402px;top:674px;width:42px;height:23px;background:#d3d3d3"></div>
<div class="c" style="left:1355px;top:674px;width:46px;height:23px;background:#d3d3d3"></div>
<div class="c" style="left:1276px;top:674px;width:78px;height:23px;background:#d3d3d3"></div>
<div class="c" style="left:1222px;top:674px;width:53px;height:23px;background:#d3d3d3"></div>
<div class="c" style="left:1165px;top:674px;width:56px;height:23px;background:#d3d3d3"></div>
<div class="c" style="left:1072px;top:674px;width:92px;height:23px;background:#d3d3d3"></div>
<div class="c" style="left:980px;top:674px;width:91px;height:23px;background:#d3d3d3"></div>
<div class="c" style="left:927px;top:674px;width:52px;height:23px;background:#d3d3d3"></div>
<div class="c" style="left:871px;top:674px;width:55px;height:23px;background:#d3d3d3"></div>
<div class="c" style="left:787px;top:674px;width:83px;height:23px;background:#d3d3d3"></div>
<div class="c" style="left:699px;top:674px;width:87px;height:23px;background:#d3d3d3"></div>
<div class="c" style="left:640px;top:674px;width:58px;height:23px;background:#d3d3d3"></div>
<div class="c" style="left:579px;top:674px;width:60px;height:23px;background:#d3d3d3"></div>
<div class="c" style="left:496px;top:674px;width:82px;height:23px;background:#d3d3d3"></div>
<div class="c" style="left:406px;top:674px;width:89px;height:23px;background:#d3d3d3"></div>
<div class="c" style="left:348px;top:674px;width:57px;height:23px;background:#d3d3d3"></div>
<div class="c" style="left:286px;top:674px;width:61px;height:23px;background:#d3d3d3"></div>
<div class="c" style="left:202px;top:674px;width:83px;height:23px;background:#d3d3d3"></div>
<div class="c" style="left:109px;top:674px;width:92px;height:23px;background:#d3d3d3"></div>
<div class="c" style="left:36px;top:674px;width:72px;height:23px;background:#d3d3d3"></div>
<div class="c lab" style="left:1780px;top:698px;width:104px;height:23px;background:#d4e6f6"><span class="l">سایر محصولات</span></div>
<div class="c un" style="left:1741px;top:698px;width:38px;height:23px;background:#d4e6f6"><span class="u">عدد</span></div>
<div class="c" style="left:1687px;top:698px;width:53px;height:23px;background:#d4e6f6"><span class="n" style="transform:scaleX(0.933)"><i class="z"></i></span></div>
<div class="c" style="left:1630px;top:698px;width:56px;height:23px;background:#d4e6f6"><span class="n" style="transform:scaleX(0.933)"><i class="z"></i></span></div>
<div class="c" style="left:1537px;top:698px;width:92px;height:23px;background:#fde3a2"><span class="n" style="transform:scaleX(0.933)"><i class="z"></i></span></div>
<div class="c" style="left:1445px;top:698px;width:91px;height:23px;background:#d4e6f6"><span class="n" style="transform:scaleX(0.933)"><i class="z"></i></span></div>
<div class="c" style="left:1402px;top:698px;width:42px;height:23px;background:#d4e6f6"></div>
<div class="c" style="left:1355px;top:698px;width:46px;height:23px;background:#d4e6f6"></div>
<div class="c" style="left:1276px;top:698px;width:78px;height:23px;background:#d4e6f6"><span class="n" style="transform:scaleX(0.933)"><i class="z"></i></span></div>
<div class="c" style="left:1222px;top:698px;width:53px;height:23px;background:#fde3a2"><span class="n" style="transform:scaleX(0.933)"><i class="z"></i></span></div>
<div class="c" style="left:1165px;top:698px;width:56px;height:23px;background:#fde3a2"><span class="n" style="transform:scaleX(0.933)"><i class="z"></i></span></div>
<div class="c" style="left:1072px;top:698px;width:92px;height:23px;background:#fde3a2"><span class="n" style="transform:scaleX(0.933)"><i class="z"></i></span></div>
<div class="c" style="left:980px;top:698px;width:91px;height:23px;background:#fde3a2"><span class="n" style="transform:scaleX(0.933)"><i class="z"></i></span></div>
<div class="c" style="left:927px;top:698px;width:52px;height:23px;background:#d4e6f6"><span class="n" style="transform:scaleX(0.933)"><i class="z"></i></span></div>
<div class="c" style="left:871px;top:698px;width:55px;height:23px;background:#d4e6f6"><span class="n" style="transform:scaleX(0.933)"><i class="z"></i></span></div>
<div class="c" style="left:787px;top:698px;width:83px;height:23px;background:#fde3a2"><span class="n" style="transform:scaleX(0.933)"><i class="z"></i></span></div>
<div class="c" style="left:699px;top:698px;width:87px;height:23px;background:#d4e6f6"><span class="n" style="transform:scaleX(0.933)"><i class="z"></i></span></div>
<div class="c" style="left:640px;top:698px;width:58px;height:23px;background:#fde3a2"><span class="n" style="transform:scaleX(0.933)"><i class="z"></i></span></div>
<div class="c" style="left:579px;top:698px;width:60px;height:23px;background:#fde3a2"><span class="n" style="transform:scaleX(0.933)"><i class="z"></i></span></div>
<div class="c" style="left:496px;top:698px;width:82px;height:23px;background:#fde3a2"><span class="n" style="transform:scaleX(0.933)"><i class="z"></i></span></div>
<div class="c" style="left:406px;top:698px;width:89px;height:23px;background:#fde3a2"><span class="n" style="transform:scaleX(0.933)"><i class="z"></i></span></div>
<div class="c" style="left:348px;top:698px;width:57px;height:23px;background:#d4e6f6"><span class="n" style="transform:scaleX(0.933)"><i class="z"></i></span></div>
<div class="c" style="left:286px;top:698px;width:61px;height:23px;background:#d4e6f6"><span class="n" style="transform:scaleX(0.933)"><i class="z"></i></span></div>
<div class="c" style="left:202px;top:698px;width:83px;height:23px;background:#fde3a2"><span class="n" style="transform:scaleX(0.933)"><i class="z"></i></span></div>
<div class="c" style="left:109px;top:698px;width:92px;height:23px;background:#d4e6f6"><span class="n" style="transform:scaleX(0.933)"><i class="z"></i></span></div>
<div class="c vz" style="left:36px;top:698px;width:72px;height:23px;background:#d4e6f6"><span class="l">تولید</span></div>
<div class="c lab" style="left:1780px;top:722px;width:104px;height:23px;background:#fde3a2"><span class="l">جمع فروش صادراتی</span></div>
<div class="c un" style="left:1741px;top:722px;width:38px;height:23px;background:#fde3a2"></div>
<div class="c" style="left:1687px;top:722px;width:53px;height:23px;background:#fde3a2"><span class="n" style="transform:scaleX(0.933)"><i class="z"></i></span></div>
<div class="c" style="left:1630px;top:722px;width:56px;height:23px;background:#fde3a2"><span class="n" style="transform:scaleX(0.933)"><i class="z"></i></span></div>
<div class="c" style="left:1537px;top:722px;width:92px;height:23px;background:#fde3a2"></div>
<div class="c" style="left:1445px;top:722px;width:91px;height:23px;background:#fde3a2"><span class="n" style="transform:scaleX(0.933)"><i class="z"></i></span></div>
<div class="c" style="left:1402px;top:722px;width:42px;height:23px;background:#fde3a2"><span class="n" style="transform:scaleX(0.933)"><i class="z"></i></span></div>
<div class="c" style="left:1355px;top:722px;width:46px;height:23px;background:#fde3a2"><span class="n" style="transform:scaleX(0.933)"><i class="z"></i></span></div>
<div class="c" style="left:1276px;top:722px;width:78px;height:23px;background:#fde3a2"><span class="n" style="transform:scaleX(0.933)"><i class="z"></i></span></div>
<div class="c" style="left:1222px;top:722px;width:53px;height:23px;background:#fde3a2"><span class="n" style="transform:scaleX(0.933)"><i class="z"></i></span></div>
<div class="c" style="left:1165px;top:722px;width:56px;height:23px;background:#fde3a2"><span class="n" style="transform:scaleX(0.933)"><i class="z"></i></span></div>
<div class="c" style="left:1072px;top:722px;width:92px;height:23px;background:#fde3a2"></div>
<div class="c" style="left:980px;top:722px;width:91px;height:23px;background:#fde3a2"><span class="n" style="transform:scaleX(0.933)"><i class="z"></i></span></div>
<div class="c" style="left:927px;top:722px;width:52px;height:23px;background:#fde3a2"><span class="n" style="transform:scaleX(0.933)"><i class="z"></i></span></div>
<div class="c" style="left:871px;top:722px;width:55px;height:23px;background:#fde3a2"><span class="n" style="transform:scaleX(0.933)"><i class="z"></i></span></div>
<div class="c" style="left:787px;top:722px;width:83px;height:23px;background:#fde3a2"></div>
<div class="c" style="left:699px;top:722px;width:87px;height:23px;background:#fde3a2"><span class="n" style="transform:scaleX(0.933)"><i class="z"></i></span></div>
<div class="c" style="left:640px;top:722px;width:58px;height:23px;background:#fde3a2"><span class="n" style="transform:scaleX(0.933)"><i class="z"></i></span></div>
<div class="c" style="left:579px;top:722px;width:60px;height:23px;background:#fde3a2"><span class="n" style="transform:scaleX(0.933)"><i class="z"></i></span></div>
<div class="c" style="left:496px;top:722px;width:82px;height:23px;background:#fde3a2"></div>
<div class="c" style="left:406px;top:722px;width:89px;height:23px;background:#fde3a2"><span class="n" style="transform:scaleX(0.933)"><i class="z"></i></span></div>
<div class="c" style="left:348px;top:722px;width:57px;height:23px;background:#fde3a2"><span class="n" style="transform:scaleX(0.933)"><i class="z"></i></span></div>
<div class="c" style="left:286px;top:722px;width:61px;height:23px;background:#fde3a2"><span class="n" style="transform:scaleX(0.933)"><i class="z"></i></span></div>
<div class="c" style="left:202px;top:722px;width:83px;height:23px;background:#fde3a2"></div>
<div class="c" style="left:109px;top:722px;width:92px;height:23px;background:#fde3a2"><span class="n" style="transform:scaleX(0.933)"><i class="z"></i></span></div>
<div class="c vz" style="left:36px;top:722px;width:72px;height:23px;background:#fde3a2"></div>
<div class="c lab sec" style="left:1780px;top:746px;width:104px;height:23px;background:#d3d3d3"><span class="l">درآمد ارائه خدمات:</span></div>
<div class="c" style="left:1741px;top:746px;width:38px;height:23px;background:#d3d3d3"></div>
<div class="c" style="left:1687px;top:746px;width:53px;height:23px;background:#d3d3d3"></div>
<div class="c" style="left:1630px;top:746px;width:56px;height:23px;background:#d3d3d3"></div>
<div class="c" style="left:1537px;top:746px;width:92px;height:23px;background:#d3d3d3"></div>
<div class="c" style="left:1445px;top:746px;width:91px;height:23px;background:#d3d3d3"></div>
<div class="c" style="left:1402px;top:746px;width:42px;height:23px;background:#d3d3d3"></div>
<div class="c" style="left:1355px;top:746px;width:46px;height:23px;background:#d3d3d3"></div>
<div class="c" style="left:1276px;top:746px;width:78px;height:23px;background:#d3d3d3"></div>
<div class="c" style="left:1222px;top:746px;width:53px;height:23px;background:#d3d3d3"></div>
<div class="c" style="left:1165px;top:746px;width:56px;height:23px;background:#d3d3d3"></div>
<div class="c" style="left:1072px;top:746px;width:92px;height:23px;background:#d3d3d3"></div>
<div class="c" style="left:980px;top:746px;width:91px;height:23px;background:#d3d3d3"></div>
<div class="c" style="left:927px;top:746px;width:52px;height:23px;background:#d3d3d3"></div>
<div class="c" style="left:871px;top:746px;width:55px;height:23px;background:#d3d3d3"></div>
<div class="c" style="left:787px;top:746px;width:83px;height:23px;background:#d3d3d3"></div>
<div class="c" style="left:699px;top:746px;width:87px;height:23px;background:#d3d3d3"></div>
<div class="c" style="left:640px;top:746px;width:58px;height:23px;background:#d3d3d3"></div>
<div class="c" style="left:579px;top:746px;width:60px;height:23px;background:#d3d3d3"></div>
<div class="c" style="left:496px;top:746px;width:82px;height:23px;background:#d3d3d3"></div>
<div class="c" style="left:406px;top:746px;width:89px;height:23px;background:#d3d3d3"></div>
<div class="c" style="left:348px;top:746px;width:57px;height:23px;background:#d3d3d3"></div>
<div class="c" style="left:286px;top:746px;width:61px;height:23px;background:#d3d3d3"></div>
<div class="c" style="left:202px;top:746px;width:83px;height:23px;background:#d3d3d3"></div>
<div class="c" style="left:109px;top:746px;width:92px;height:23px;background:#d3d3d3"></div>
<div class="c" style="left:36px;top:746px;width:72px;height:23px;background:#d3d3d3"></div>
<div class="c lab" style="left:1780px;top:770px;width:104px;height:41px;background:#d4e6f6"><span class="l">خدمات بازرسي<br>،طراحي ومهندسي</span></div>
<div class="c un" style="left:1741px;top:770px;width:38px;height:41px;background:#d4e6f6"><span class="u">عدد</span></div>
<div class="c" style="left:1687px;top:770px;width:53px;height:41px;background:#d4e6f6"><span class="n" style="transform:scaleX(0.833)">۱۲</span></div>
<div class="c" style="left:1630px;top:770px;width:56px;height:41px;background:#d4e6f6"><span class="n" style="transform:scaleX(0.833)">۱۲</span></div>
<div class="c" style="left:1537px;top:770px;width:92px;height:41px;background:#fde3a2"><span class="n" style="transform:scaleX(1.220)">۲,۱۵۸,۳۳۳,۳۳۳</span></div>
<div class="c" style="left:1445px;top:770px;width:91px;height:41px;background:#d4e6f6"><span class="n" style="transform:scaleX(1.118)">۲۵,۹<i class="z"></i><i class="z"></i></span></div>
<div class="c" style="left:1402px;top:770px;width:42px;height:41px;background:#d4e6f6"><span class="n" style="transform:scaleX(0.933)"><i class="z"></i></span></div>
<div class="c" style="left:1355px;top:770px;width:46px;height:41px;background:#d4e6f6"><span class="n" style="transform:scaleX(0.933)"><i class="z"></i></span></div>
<div class="c" style="left:1276px;top:770px;width:78px;height:41px;background:#d4e6f6"><span class="n" style="transform:scaleX(0.933)"><i class="z"></i></span></div>
<div class="c" style="left:1222px;top:770px;width:53px;height:41px;background:#fde3a2"><span class="n" style="transform:scaleX(0.833)">۱۲</span></div>
<div class="c" style="left:1165px;top:770px;width:56px;height:41px;background:#fde3a2"><span class="n" style="transform:scaleX(0.833)">۱۲</span></div>
<div class="c" style="left:1072px;top:770px;width:92px;height:41px;background:#fde3a2"><span class="n" style="transform:scaleX(1.220)">۲,۱۵۸,۳۳۳,۳۳۳</span></div>
<div class="c" style="left:980px;top:770px;width:91px;height:41px;background:#fde3a2"><span class="n" style="transform:scaleX(1.118)">۲۵,۹<i class="z"></i><i class="z"></i></span></div>
<div class="c" style="left:927px;top:770px;width:52px;height:41px;background:#d4e6f6"><span class="n" style="transform:scaleX(0.833)">۲۱</span></div>
<div class="c" style="left:871px;top:770px;width:55px;height:41px;background:#d4e6f6"><span class="n" style="transform:scaleX(0.833)">۲۱</span></div>
<div class="c" style="left:787px;top:770px;width:83px;height:41px;background:#fde3a2"><span class="n" style="transform:scaleX(1.152)">۳۱۸,<i class="z"></i>۹۵,۲۳۸</span></div>
<div class="c" style="left:699px;top:770px;width:87px;height:41px;background:#d4e6f6"><span class="n" style="transform:scaleX(1.067)">۶,۶۸<i class="z"></i></span></div>
<div class="c" style="left:640px;top:770px;width:58px;height:41px;background:#fde3a2"><span class="n" style="transform:scaleX(1.333)">۳۳</span></div>
<div class="c" style="left:579px;top:770px;width:60px;height:41px;background:#fde3a2"><span class="n" style="transform:scaleX(1.333)">۳۳</span></div>
<div class="c" style="left:496px;top:770px;width:82px;height:41px;background:#fde3a2"><span class="n" style="transform:scaleX(1.195)">۹۸۷,۲۷۲,۷۲۷</span></div>
<div class="c" style="left:406px;top:770px;width:89px;height:41px;background:#fde3a2"><span class="n" style="transform:scaleX(1.191)">۳۲,۵۸<i class="z"></i></span></div>
<div class="c" style="left:348px;top:770px;width:57px;height:41px;background:#d4e6f6"><span class="n" style="transform:scaleX(0.800)">۱</span></div>
<div class="c" style="left:286px;top:770px;width:61px;height:41px;background:#d4e6f6"><span class="n" style="transform:scaleX(0.800)">۱</span></div>
<div class="c" style="left:202px;top:770px;width:83px;height:41px;background:#fde3a2"><span class="n" style="transform:scaleX(1.044)">۹۴,<i class="z"></i><i class="z"></i><i class="z"></i>,<i class="z"></i><i class="z"></i><i class="z"></i></span></div>
<div class="c" style="left:109px;top:770px;width:92px;height:41px;background:#d4e6f6"><span class="n" style="transform:scaleX(1.183)">۹۴</span></div>
<div class="c vz" style="left:36px;top:770px;width:72px;height:41px;background:#d4e6f6"><span class="l">تولید</span></div>
<div class="c lab" style="left:1780px;top:812px;width:104px;height:40px;background:#fde3a2"><span class="l">جمع درآمد ارائه<br>خدمات</span></div>
<div class="c un" style="left:1741px;top:812px;width:38px;height:40px;background:#fde3a2"></div>
<div class="c" style="left:1687px;top:812px;width:53px;height:40px;background:#fde3a2"><span class="n" style="transform:scaleX(0.833)">۱۲</span></div>
<div class="c" style="left:1630px;top:812px;width:56px;height:40px;background:#fde3a2"><span class="n" style="transform:scaleX(0.833)">۱۲</span></div>
<div class="c" style="left:1537px;top:812px;width:92px;height:40px;background:#fde3a2"></div>
<div class="c" style="left:1445px;top:812px;width:91px;height:40px;background:#fde3a2"><span class="n" style="transform:scaleX(1.118)">۲۵,۹<i class="z"></i><i class="z"></i></span></div>
<div class="c" style="left:1402px;top:812px;width:42px;height:40px;background:#fde3a2"><span class="n" style="transform:scaleX(0.933)"><i class="z"></i></span></div>
<div class="c" style="left:1355px;top:812px;width:46px;height:40px;background:#fde3a2"><span class="n" style="transform:scaleX(0.933)"><i class="z"></i></span></div>
<div class="c" style="left:1276px;top:812px;width:78px;height:40px;background:#fde3a2"><span class="n" style="transform:scaleX(0.933)"><i class="z"></i></span></div>
<div class="c" style="left:1222px;top:812px;width:53px;height:40px;background:#fde3a2"><span class="n" style="transform:scaleX(0.933)"><i class="z"></i></span></div>
<div class="c" style="left:1165px;top:812px;width:56px;height:40px;background:#fde3a2"><span class="n" style="transform:scaleX(0.933)"><i class="z"></i></span></div>
<div class="c" style="left:1072px;top:812px;width:92px;height:40px;background:#fde3a2"></div>
<div class="c" style="left:980px;top:812px;width:91px;height:40px;background:#fde3a2"><span class="n" style="transform:scaleX(1.118)">۲۵,۹<i class="z"></i><i class="z"></i></span></div>
<div class="c" style="left:927px;top:812px;width:52px;height:40px;background:#fde3a2"><span class="n" style="transform:scaleX(0.833)">۲۱</span></div>
<div class="c" style="left:871px;top:812px;width:55px;height:40px;background:#fde3a2"><span class="n" style="transform:scaleX(0.833)">۲۱</span></div>
<div class="c" style="left:787px;top:812px;width:83px;height:40px;background:#fde3a2"></div>
<div class="c" style="left:699px;top:812px;width:87px;height:40px;background:#fde3a2"><span class="n" style="transform:scaleX(1.067)">۶,۶۸<i class="z"></i></span></div>
<div class="c" style="left:640px;top:812px;width:58px;height:40px;background:#fde3a2"><span class="n" style="transform:scaleX(1.333)">۳۳</span></div>
<div class="c" style="left:579px;top:812px;width:60px;height:40px;background:#fde3a2"><span class="n" style="transform:scaleX(1.333)">۳۳</span></div>
<div class="c" style="left:496px;top:812px;width:82px;height:40px;background:#fde3a2"></div>
<div class="c" style="left:406px;top:812px;width:89px;height:40px;background:#fde3a2"><span class="n" style="transform:scaleX(1.191)">۳۲,۵۸<i class="z"></i></span></div>
<div class="c" style="left:348px;top:812px;width:57px;height:40px;background:#fde3a2"><span class="n" style="transform:scaleX(0.800)">۱</span></div>
<div class="c" style="left:286px;top:812px;width:61px;height:40px;background:#fde3a2"><span class="n" style="transform:scaleX(0.800)">۱</span></div>
<div class="c" style="left:202px;top:812px;width:83px;height:40px;background:#fde3a2"></div>
<div class="c" style="left:109px;top:812px;width:92px;height:40px;background:#fde3a2"><span class="n" style="transform:scaleX(1.183)">۹۴</span></div>
<div class="c vz" style="left:36px;top:812px;width:72px;height:40px;background:#fde3a2"></div>
<div class="c lab sec" style="left:1780px;top:853px;width:104px;height:23px;background:#d3d3d3"><span class="l">برگشت از فروش:</span></div>
<div class="c" style="left:1741px;top:853px;width:38px;height:23px;background:#d3d3d3"></div>
<div class="c" style="left:1687px;top:853px;width:53px;height:23px;background:#d3d3d3"></div>
<div class="c" style="left:1630px;top:853px;width:56px;height:23px;background:#d3d3d3"></div>
<div class="c" style="left:1537px;top:853px;width:92px;height:23px;background:#d3d3d3"></div>
<div class="c" style="left:1445px;top:853px;width:91px;height:23px;background:#d3d3d3"></div>
<div class="c" style="left:1402px;top:853px;width:42px;height:23px;background:#d3d3d3"></div>
<div class="c" style="left:1355px;top:853px;width:46px;height:23px;background:#d3d3d3"></div>
<div class="c" style="left:1276px;top:853px;width:78px;height:23px;background:#d3d3d3"></div>
<div class="c" style="left:1222px;top:853px;width:53px;height:23px;background:#d3d3d3"></div>
<div class="c" style="left:1165px;top:853px;width:56px;height:23px;background:#d3d3d3"></div>
<div class="c" style="left:1072px;top:853px;width:92px;height:23px;background:#d3d3d3"></div>
<div class="c" style="left:980px;top:853px;width:91px;height:23px;background:#d3d3d3"></div>
<div class="c" style="left:927px;top:853px;width:52px;height:23px;background:#d3d3d3"></div>
<div class="c" style="left:871px;top:853px;width:55px;height:23px;background:#d3d3d3"></div>
<div class="c" style="left:787px;top:853px;width:83px;height:23px;background:#d3d3d3"></div>
<div class="c" style="left:699px;top:853px;width:87px;height:23px;background:#d3d3d3"></div>
<div class="c" style="left:640px;top:853px;width:58px;height:23px;background:#d3d3d3"></div>
<div class="c" style="left:579px;top:853px;width:60px;height:23px;background:#d3d3d3"></div>
<div class="c" style="left:496px;top:853px;width:82px;height:23px;background:#d3d3d3"></div>
<div class="c" style="left:406px;top:853px;width:89px;height:23px;background:#d3d3d3"></div>
<div class="c" style="left:348px;top:853px;width:57px;height:23px;background:#d3d3d3"></div>
<div class="c" style="left:286px;top:853px;width:61px;height:23px;background:#d3d3d3"></div>
<div class="c" style="left:202px;top:853px;width:83px;height:23px;background:#d3d3d3"></div>
<div class="c" style="left:109px;top:853px;width:92px;height:23px;background:#d3d3d3"></div>
<div class="c" style="left:36px;top:853px;width:72px;height:23px;background:#d3d3d3"></div>
<div class="c lab" style="left:1780px;top:877px;width:104px;height:41px;background:#d4e6f6"><span class="l">انواع اکسل<br>وانت،پیکاپ و آفرود</span></div>
<div class="c un" style="left:1741px;top:877px;width:38px;height:41px;background:#d4e6f6"><span class="u">دستگاه</span></div>
<div class="c" style="left:1687px;top:877px;width:53px;height:41px;background:#d4e6f6"></div>
<div class="c" style="left:1630px;top:877px;width:56px;height:41px;background:#d4e6f6"><span class="n r" style="transform:scaleX(1.150)">(۴)</span></div>
<div class="c" style="left:1537px;top:877px;width:92px;height:41px;background:#fde3a2"><span class="n" style="transform:scaleX(1.115)">۲۸۵,۷۵<i class="z"></i>,<i class="z"></i><i class="z"></i><i class="z"></i></span></div>
<div class="c" style="left:1445px;top:877px;width:91px;height:41px;background:#d4e6f6"><span class="n r" style="transform:scaleX(0.989)">(۱,۱۴۳)</span></div>
<div class="c" style="left:1402px;top:877px;width:42px;height:41px;background:#d4e6f6"></div>
<div class="c" style="left:1355px;top:877px;width:46px;height:41px;background:#d4e6f6"></div>
<div class="c" style="left:1276px;top:877px;width:78px;height:41px;background:#d4e6f6"></div>
<div class="c" style="left:1222px;top:877px;width:53px;height:41px;background:#d4e6f6"></div>
<div class="c" style="left:1165px;top:877px;width:56px;height:41px;background:#fde3a2"><span class="n r" style="transform:scaleX(1.150)">(۴)</span></div>
<div class="c" style="left:1072px;top:877px;width:92px;height:41px;background:#fde3a2"><span class="n" style="transform:scaleX(1.115)">۲۸۵,۷۵<i class="z"></i>,<i class="z"></i><i class="z"></i><i class="z"></i></span></div>
<div class="c" style="left:980px;top:877px;width:91px;height:41px;background:#fde3a2"><span class="n r" style="transform:scaleX(0.989)">(۱,۱۴۳)</span></div>
<div class="c" style="left:927px;top:877px;width:52px;height:41px;background:#d4e6f6"></div>
<div class="c" style="left:871px;top:877px;width:55px;height:41px;background:#d4e6f6"><span class="n r" style="transform:scaleX(1.171)">(۵)</span></div>
<div class="c" style="left:787px;top:877px;width:83px;height:41px;background:#fde3a2"><span class="n" style="transform:scaleX(1.089)">۲۸۵,۸<i class="z"></i><i class="z"></i>,<i class="z"></i><i class="z"></i><i class="z"></i></span></div>
<div class="c" style="left:699px;top:877px;width:87px;height:41px;background:#d4e6f6"><span class="n r" style="transform:scaleX(1.057)">(۱,۴۲۹)</span></div>
<div class="c" style="left:640px;top:877px;width:58px;height:41px;background:#fde3a2"></div>
<div class="c" style="left:579px;top:877px;width:60px;height:41px;background:#fde3a2"><span class="n r" style="transform:scaleX(1.136)">(۹)</span></div>
<div class="c" style="left:496px;top:877px;width:82px;height:41px;background:#fde3a2"><span class="n" style="transform:scaleX(1.223)">۲۸۵,۷۷۷,۷۷۸</span></div>
<div class="c" style="left:406px;top:877px;width:89px;height:41px;background:#fde3a2"><span class="n r" style="transform:scaleX(1.171)">(۲,۵۷۲)</span></div>
<div class="c" style="left:348px;top:877px;width:57px;height:41px;background:#d4e6f6"></div>
<div class="c" style="left:286px;top:877px;width:61px;height:41px;background:#d4e6f6"><span class="n r" style="transform:scaleX(1.207)">(۳)</span></div>
<div class="c" style="left:202px;top:877px;width:83px;height:41px;background:#fde3a2"><span class="n" style="transform:scaleX(1.048)">۲۱۵,۶۶۶,۶۶۷</span></div>
<div class="c" style="left:109px;top:877px;width:92px;height:41px;background:#d4e6f6"><span class="n r" style="transform:scaleX(1.154)">(۶۴۷)</span></div>
<div class="c vz" style="left:36px;top:877px;width:72px;height:41px;background:#d4e6f6"><span class="l">تولید</span></div>
<div class="c lab" style="left:1780px;top:919px;width:104px;height:40px;background:#efefef"><span class="l">اکسل کامیونت و<br>مینی بوس</span></div>
<div class="c un" style="left:1741px;top:919px;width:38px;height:40px;background:#efefef"><span class="u">دستگاه</span></div>
<div class="c" style="left:1687px;top:919px;width:53px;height:40px;background:#efefef"></div>
<div class="c" style="left:1630px;top:919px;width:56px;height:40px;background:#efefef"><span class="n r" style="transform:scaleX(0.871)">(۱)</span></div>
<div class="c" style="left:1537px;top:919px;width:92px;height:40px;background:#fde3a2"><span class="n" style="transform:scaleX(1.010)">۸<i class="z"></i><i class="z"></i>,<i class="z"></i><i class="z"></i><i class="z"></i>,<i class="z"></i><i class="z"></i><i class="z"></i></span></div>
<div class="c" style="left:1445px;top:919px;width:91px;height:40px;background:#efefef"><span class="n r" style="transform:scaleX(1.100)">(۸<i class="z"></i><i class="z"></i>)</span></div>
<div class="c" style="left:1402px;top:919px;width:42px;height:40px;background:#efefef"></div>
<div class="c" style="left:1355px;top:919px;width:46px;height:40px;background:#efefef"></div>
<div class="c" style="left:1276px;top:919px;width:78px;height:40px;background:#efefef"></div>
<div class="c" style="left:1222px;top:919px;width:53px;height:40px;background:#efefef"></div>
<div class="c" style="left:1165px;top:919px;width:56px;height:40px;background:#fde3a2"><span class="n r" style="transform:scaleX(0.871)">(۱)</span></div>
<div class="c" style="left:1072px;top:919px;width:92px;height:40px;background:#fde3a2"><span class="n" style="transform:scaleX(1.010)">۸<i class="z"></i><i class="z"></i>,<i class="z"></i><i class="z"></i><i class="z"></i>,<i class="z"></i><i class="z"></i><i class="z"></i></span></div>
<div class="c" style="left:980px;top:919px;width:91px;height:40px;background:#fde3a2"><span class="n r" style="transform:scaleX(1.100)">(۸<i class="z"></i><i class="z"></i>)</span></div>
<div class="c" style="left:927px;top:919px;width:52px;height:40px;background:#efefef"></div>
<div class="c" style="left:871px;top:919px;width:55px;height:40px;background:#efefef"><span class="n" style="transform:scaleX(0.933)"><i class="z"></i></span></div>
<div class="c" style="left:787px;top:919px;width:83px;height:40px;background:#fde3a2"><span class="n" style="transform:scaleX(0.933)"><i class="z"></i></span></div>
<div class="c" style="left:699px;top:919px;width:87px;height:40px;background:#efefef"><span class="n" style="transform:scaleX(0.933)"><i class="z"></i></span></div>
<div class="c" style="left:640px;top:919px;width:58px;height:40px;background:#fde3a2"></div>
<div class="c" style="left:579px;top:919px;width:60px;height:40px;background:#fde3a2"><span class="n r" style="transform:scaleX(0.871)">(۱)</span></div>
<div class="c" style="left:496px;top:919px;width:82px;height:40px;background:#fde3a2"><span class="n" style="transform:scaleX(1.010)">۸<i class="z"></i><i class="z"></i>,<i class="z"></i><i class="z"></i><i class="z"></i>,<i class="z"></i><i class="z"></i><i class="z"></i></span></div>
<div class="c" style="left:406px;top:919px;width:89px;height:40px;background:#fde3a2"><span class="n r" style="transform:scaleX(1.100)">(۸<i class="z"></i><i class="z"></i>)</span></div>
<div class="c" style="left:348px;top:919px;width:57px;height:40px;background:#efefef"></div>
<div class="c" style="left:286px;top:919px;width:61px;height:40px;background:#efefef"><span class="n" style="transform:scaleX(0.933)"><i class="z"></i></span></div>
<div class="c" style="left:202px;top:919px;width:83px;height:40px;background:#fde3a2"><span class="n" style="transform:scaleX(0.933)"><i class="z"></i></span></div>
<div class="c" style="left:109px;top:919px;width:92px;height:40px;background:#efefef"><span class="n" style="transform:scaleX(0.933)"><i class="z"></i></span></div>
<div class="c vz" style="left:36px;top:919px;width:72px;height:40px;background:#efefef"><span class="l">تولید</span></div>
<div class="c lab" style="left:1780px;top:960px;width:104px;height:41px;background:#d4e6f6"><span class="l">انواع اکسل کامیون و<br>اتوبوس</span></div>
<div class="c un" style="left:1741px;top:960px;width:38px;height:41px;background:#d4e6f6"><span class="u">دستگاه</span></div>
<div class="c" style="left:1687px;top:960px;width:53px;height:41px;background:#d4e6f6"></div>
<div class="c" style="left:1630px;top:960px;width:56px;height:41px;background:#d4e6f6"><span class="n r" style="transform:scaleX(1.170)">(۲۵)</span></div>
<div class="c" style="left:1537px;top:960px;width:92px;height:41px;background:#fde3a2"><span class="n" style="transform:scaleX(1.149)">۳۳۳,۴۴<i class="z"></i>,<i class="z"></i><i class="z"></i><i class="z"></i></span></div>
<div class="c" style="left:1445px;top:960px;width:91px;height:41px;background:#d4e6f6"><span class="n r" style="transform:scaleX(1.203)">(۸,۳۳۶)</span></div>
<div class="c" style="left:1402px;top:960px;width:42px;height:41px;background:#d4e6f6"></div>
<div class="c" style="left:1355px;top:960px;width:46px;height:41px;background:#d4e6f6"></div>
<div class="c" style="left:1276px;top:960px;width:78px;height:41px;background:#d4e6f6"></div>
<div class="c" style="left:1222px;top:960px;width:53px;height:41px;background:#d4e6f6"></div>
<div class="c" style="left:1165px;top:960px;width:56px;height:41px;background:#fde3a2"><span class="n r" style="transform:scaleX(1.170)">(۲۵)</span></div>
<div class="c" style="left:1072px;top:960px;width:92px;height:41px;background:#fde3a2"><span class="n" style="transform:scaleX(1.149)">۳۳۳,۴۴<i class="z"></i>,<i class="z"></i><i class="z"></i><i class="z"></i></span></div>
<div class="c" style="left:980px;top:960px;width:91px;height:41px;background:#fde3a2"><span class="n r" style="transform:scaleX(1.203)">(۸,۳۳۶)</span></div>
<div class="c" style="left:927px;top:960px;width:52px;height:41px;background:#d4e6f6"></div>
<div class="c" style="left:871px;top:960px;width:55px;height:41px;background:#d4e6f6"><span class="n r" style="transform:scaleX(1.150)">(۴)</span></div>
<div class="c" style="left:787px;top:960px;width:83px;height:41px;background:#fde3a2"><span class="n" style="transform:scaleX(1.024)">۱,۶۲۷,۵<i class="z"></i><i class="z"></i>,<i class="z"></i><i class="z"></i><i class="z"></i></span></div>
<div class="c" style="left:699px;top:960px;width:87px;height:41px;background:#d4e6f6"><span class="n r" style="transform:scaleX(1.014)">(۶,۵۱<i class="z"></i>)</span></div>
<div class="c" style="left:640px;top:960px;width:58px;height:41px;background:#fde3a2"></div>
<div class="c" style="left:579px;top:960px;width:60px;height:41px;background:#fde3a2"><span class="n r" style="transform:scaleX(1.145)">(۲۹)</span></div>
<div class="c" style="left:496px;top:960px;width:82px;height:41px;background:#fde3a2"><span class="n" style="transform:scaleX(1.027)">۵۱۱,۹۳۱,<i class="z"></i>۳۴</span></div>
<div class="c" style="left:406px;top:960px;width:89px;height:41px;background:#fde3a2"><span class="n r" style="transform:scaleX(1.076)">(۱۴,۸۴۶)</span></div>
<div class="c" style="left:348px;top:960px;width:57px;height:41px;background:#d4e6f6"></div>
<div class="c" style="left:286px;top:960px;width:61px;height:41px;background:#d4e6f6"><span class="n r" style="transform:scaleX(0.871)">(۱)</span></div>
<div class="c" style="left:202px;top:960px;width:83px;height:41px;background:#fde3a2"><span class="n" style="transform:scaleX(1.071)">۳,۶۵۲,<i class="z"></i><i class="z"></i><i class="z"></i>,<i class="z"></i><i class="z"></i><i class="z"></i></span></div>
<div class="c" style="left:109px;top:960px;width:92px;height:41px;background:#d4e6f6"><span class="n r" style="transform:scaleX(1.171)">(۳,۶۵۲)</span></div>
<div class="c vz" style="left:36px;top:960px;width:72px;height:41px;background:#d4e6f6"><span class="l">تولید</span></div>
<div class="c lab" style="left:1780px;top:1002px;width:104px;height:23px;background:#efefef"><span class="l">سایر محصولات</span></div>
<div class="c un" style="left:1741px;top:1002px;width:38px;height:23px;background:#efefef"><span class="u">عدد</span></div>
<div class="c" style="left:1687px;top:1002px;width:53px;height:23px;background:#efefef"></div>
<div class="c" style="left:1630px;top:1002px;width:56px;height:23px;background:#efefef"><span class="n" style="transform:scaleX(0.933)"><i class="z"></i></span></div>
<div class="c" style="left:1537px;top:1002px;width:92px;height:23px;background:#fde3a2"><span class="n" style="transform:scaleX(0.933)"><i class="z"></i></span></div>
<div class="c" style="left:1445px;top:1002px;width:91px;height:23px;background:#efefef"><span class="n" style="transform:scaleX(0.933)"><i class="z"></i></span></div>
<div class="c" style="left:1402px;top:1002px;width:42px;height:23px;background:#efefef"></div>
<div class="c" style="left:1355px;top:1002px;width:46px;height:23px;background:#efefef"></div>
<div class="c" style="left:1276px;top:1002px;width:78px;height:23px;background:#efefef"></div>
<div class="c" style="left:1222px;top:1002px;width:53px;height:23px;background:#efefef"></div>
<div class="c" style="left:1165px;top:1002px;width:56px;height:23px;background:#fde3a2"><span class="n" style="transform:scaleX(0.933)"><i class="z"></i></span></div>
<div class="c" style="left:1072px;top:1002px;width:92px;height:23px;background:#fde3a2"><span class="n" style="transform:scaleX(0.933)"><i class="z"></i></span></div>
<div class="c" style="left:980px;top:1002px;width:91px;height:23px;background:#fde3a2"><span class="n" style="transform:scaleX(0.933)"><i class="z"></i></span></div>
<div class="c" style="left:927px;top:1002px;width:52px;height:23px;background:#efefef"></div>
<div class="c" style="left:871px;top:1002px;width:55px;height:23px;background:#efefef"><span class="n" style="transform:scaleX(0.933)"><i class="z"></i></span></div>
<div class="c" style="left:787px;top:1002px;width:83px;height:23px;background:#fde3a2"><span class="n" style="transform:scaleX(0.933)"><i class="z"></i></span></div>
<div class="c" style="left:699px;top:1002px;width:87px;height:23px;background:#efefef"><span class="n" style="transform:scaleX(0.933)"><i class="z"></i></span></div>
<div class="c" style="left:640px;top:1002px;width:58px;height:23px;background:#fde3a2"></div>
<div class="c" style="left:579px;top:1002px;width:60px;height:23px;background:#fde3a2"><span class="n" style="transform:scaleX(0.933)"><i class="z"></i></span></div>
<div class="c" style="left:496px;top:1002px;width:82px;height:23px;background:#fde3a2"><span class="n" style="transform:scaleX(0.933)"><i class="z"></i></span></div>
<div class="c" style="left:406px;top:1002px;width:89px;height:23px;background:#fde3a2"><span class="n" style="transform:scaleX(0.933)"><i class="z"></i></span></div>
<div class="c" style="left:348px;top:1002px;width:57px;height:23px;background:#efefef"></div>
<div class="c" style="left:286px;top:1002px;width:61px;height:23px;background:#efefef"><span class="n r" style="transform:scaleX(1.209)">(۳,۸۴۹)</span></div>
<div class="c" style="left:202px;top:1002px;width:83px;height:23px;background:#fde3a2"><span class="n" style="transform:scaleX(1.087)">۳۱,۹۲۸,۸۱۳</span></div>
<div class="c" style="left:109px;top:1002px;width:92px;height:23px;background:#efefef"><span class="n r" style="transform:scaleX(1.098)">(۱۲۲,۸۹۴)</span></div>
<div class="c vz" style="left:36px;top:1002px;width:72px;height:23px;background:#efefef"><span class="l">تولید</span></div>
<div class="c lab" style="left:1780px;top:1026px;width:104px;height:40px;background:#fde3a2"><span class="l">جمع برگشت از<br>فروش</span></div>
<div class="c un" style="left:1741px;top:1026px;width:38px;height:40px;background:#fde3a2"></div>
<div class="c" style="left:1687px;top:1026px;width:53px;height:40px;background:#fde3a2"></div>
<div class="c" style="left:1630px;top:1026px;width:56px;height:40px;background:#fde3a2"><span class="n r" style="transform:scaleX(1.155)">(۳<i class="z"></i>)</span></div>
<div class="c" style="left:1537px;top:1026px;width:92px;height:40px;background:#fde3a2"></div>
<div class="c" style="left:1445px;top:1026px;width:91px;height:40px;background:#fde3a2"><span class="n r" style="transform:scaleX(1.056)">(۱<i class="z"></i>,۲۷۹)</span></div>
<div class="c" style="left:1402px;top:1026px;width:42px;height:40px;background:#fde3a2"></div>
<div class="c" style="left:1355px;top:1026px;width:46px;height:40px;background:#fde3a2"><span class="n" style="transform:scaleX(0.933)"><i class="z"></i></span></div>
<div class="c" style="left:1276px;top:1026px;width:78px;height:40px;background:#fde3a2"><span class="n" style="transform:scaleX(0.933)"><i class="z"></i></span></div>
<div class="c" style="left:1222px;top:1026px;width:53px;height:40px;background:#fde3a2"></div>
<div class="c" style="left:1165px;top:1026px;width:56px;height:40px;background:#fde3a2"><span class="n r" style="transform:scaleX(1.155)">(۳<i class="z"></i>)</span></div>
<div class="c" style="left:1072px;top:1026px;width:92px;height:40px;background:#fde3a2"></div>
<div class="c" style="left:980px;top:1026px;width:91px;height:40px;background:#fde3a2"><span class="n r" style="transform:scaleX(1.056)">(۱<i class="z"></i>,۲۷۹)</span></div>
<div class="c" style="left:927px;top:1026px;width:52px;height:40px;background:#fde3a2"></div>
<div class="c" style="left:871px;top:1026px;width:55px;height:40px;background:#fde3a2"><span class="n r" style="transform:scaleX(1.136)">(۹)</span></div>
<div class="c" style="left:787px;top:1026px;width:83px;height:40px;background:#fde3a2"></div>
<div class="c" style="left:699px;top:1026px;width:87px;height:40px;background:#fde3a2"><span class="n r" style="transform:scaleX(1.203)">(۷,۹۳۹)</span></div>
<div class="c" style="left:640px;top:1026px;width:58px;height:40px;background:#fde3a2"></div>
<div class="c" style="left:579px;top:1026px;width:60px;height:40px;background:#fde3a2"><span class="n r" style="transform:scaleX(1.210)">(۳۹)</span></div>
<div class="c" style="left:496px;top:1026px;width:82px;height:40px;background:#fde3a2"></div>
<div class="c" style="left:406px;top:1026px;width:89px;height:40px;background:#fde3a2"><span class="n r" style="transform:scaleX(1.000)">(۱۸,۲۱۸)</span></div>
<div class="c" style="left:348px;top:1026px;width:57px;height:40px;background:#fde3a2"></div>
<div class="c" style="left:286px;top:1026px;width:61px;height:40px;background:#fde3a2"><span class="n r" style="transform:scaleX(1.246)">(۳,۸۵۳)</span></div>
<div class="c" style="left:202px;top:1026px;width:83px;height:40px;background:#fde3a2"></div>
<div class="c" style="left:109px;top:1026px;width:92px;height:40px;background:#fde3a2"><span class="n r" style="transform:scaleX(1.043)">(۱۲۷,۱۹۳)</span></div>
<div class="c vz" style="left:36px;top:1026px;width:72px;height:40px;background:#fde3a2"></div>
<div class="c lab" style="left:1780px;top:1067px;width:104px;height:23px;background:#d4e6f6"><span class="l">تخفیفات</span></div>
<div class="c un" style="left:1741px;top:1067px;width:38px;height:23px;background:#d4e6f6"></div>
<div class="c" style="left:1687px;top:1067px;width:53px;height:23px;background:#d3d3d3"></div>
<div class="c" style="left:1630px;top:1067px;width:56px;height:23px;background:#d3d3d3"></div>
<div class="c" style="left:1537px;top:1067px;width:92px;height:23px;background:#d3d3d3"></div>
<div class="c" style="left:1445px;top:1067px;width:91px;height:23px;background:#d4e6f6"><span class="n" style="transform:scaleX(0.933)"><i class="z"></i></span></div>
<div class="c" style="left:1402px;top:1067px;width:42px;height:23px;background:#d3d3d3"></div>
<div class="c" style="left:1355px;top:1067px;width:46px;height:23px;background:#d3d3d3"></div>
<div class="c" style="left:1276px;top:1067px;width:78px;height:23px;background:#d4e6f6"><span class="n" style="transform:scaleX(0.933)"><i class="z"></i></span></div>
<div class="c" style="left:1222px;top:1067px;width:53px;height:23px;background:#d3d3d3"></div>
<div class="c" style="left:1165px;top:1067px;width:56px;height:23px;background:#d3d3d3"></div>
<div class="c" style="left:1072px;top:1067px;width:92px;height:23px;background:#d3d3d3"></div>
<div class="c" style="left:980px;top:1067px;width:91px;height:23px;background:#d4e6f6"><span class="n" style="transform:scaleX(0.933)"><i class="z"></i></span></div>
<div class="c" style="left:927px;top:1067px;width:52px;height:23px;background:#d3d3d3"></div>
<div class="c" style="left:871px;top:1067px;width:55px;height:23px;background:#d3d3d3"></div>
<div class="c" style="left:787px;top:1067px;width:83px;height:23px;background:#d3d3d3"></div>
<div class="c" style="left:699px;top:1067px;width:87px;height:23px;background:#d4e6f6"><span class="n" style="transform:scaleX(0.933)"><i class="z"></i></span></div>
<div class="c" style="left:640px;top:1067px;width:58px;height:23px;background:#d3d3d3"></div>
<div class="c" style="left:579px;top:1067px;width:60px;height:23px;background:#d3d3d3"></div>
<div class="c" style="left:496px;top:1067px;width:82px;height:23px;background:#d3d3d3"></div>
<div class="c" style="left:406px;top:1067px;width:89px;height:23px;background:#d4e6f6"><span class="n" style="transform:scaleX(0.933)"><i class="z"></i></span></div>
<div class="c" style="left:348px;top:1067px;width:57px;height:23px;background:#d3d3d3"></div>
<div class="c" style="left:286px;top:1067px;width:61px;height:23px;background:#d3d3d3"></div>
<div class="c" style="left:202px;top:1067px;width:83px;height:23px;background:#d3d3d3"></div>
<div class="c" style="left:109px;top:1067px;width:92px;height:23px;background:#d4e6f6"><span class="n" style="transform:scaleX(0.933)"><i class="z"></i></span></div>
<div class="c vz" style="left:36px;top:1067px;width:72px;height:23px;background:#d4e6f6"></div>
<div id="wm" class="a" style="left:949px;top:553px;width:0;height:0"><div style="position:absolute;left:-400px;top:-60px;width:800px;height:120px;text-align:center;direction:ltr;font-family:'Liberation Sans',sans-serif;font-weight:bold;font-size:96px;line-height:120px;color:rgba(60,60,60,0.065);transform:rotate(-46deg);white-space:nowrap">@Codal360.ir</div></div>
</body></html>
